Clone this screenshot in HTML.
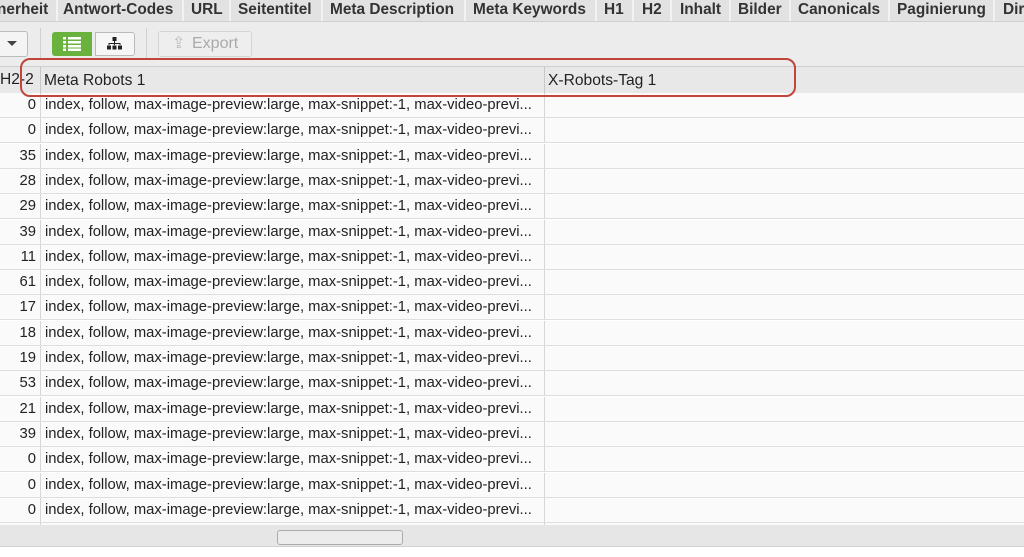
<!DOCTYPE html><html><head><style>
body{margin:0;width:1024px;height:557px;overflow:hidden;background:#fff;font-family:"Liberation Sans",sans-serif;position:relative}
.tabs{position:absolute;top:0;left:0;width:1024px;height:21px;background:#e2e2e2;border-bottom:1px solid #cfcfcf}
.tab{position:absolute;top:0;height:21px;line-height:20px;font-size:15.4px;font-weight:bold;color:#333;white-space:nowrap}
.sep{position:absolute;top:0;width:2px;height:21px;background:#f2f2f2}
.tb{position:absolute;top:22px;left:0;width:1024px;height:44px;background:#ececec}
.hdr{position:absolute;top:66px;left:0;width:1024px;height:26px;background:#e8e8e8;border-top:1px solid #cfcfcf;border-bottom:1px solid #cfcfcf;font-size:15.6px;color:#222}
.row{position:absolute;left:0;width:1024px;height:24px;border-bottom:1px solid #dedede;background:#fafafa;font-size:14.8px;color:#222;line-height:25px}
.n{position:absolute;right:988px;text-align:right}
.t{position:absolute;left:45px;white-space:nowrap}
.v{position:absolute;top:0;bottom:0;width:1px;background:#d6d6d6}
</style></head><body>
<div class="tabs">
<div class="tab" style="left:-3px">nerheit</div>
<div class="tab" style="left:63px">Antwort-Codes</div>
<div class="tab" style="left:191px">URL</div>
<div class="tab" style="left:238px">Seitentitel</div>
<div class="tab" style="left:330px">Meta Description</div>
<div class="tab" style="left:473px">Meta Keywords</div>
<div class="tab" style="left:604px">H1</div>
<div class="tab" style="left:642px">H2</div>
<div class="tab" style="left:680px">Inhalt</div>
<div class="tab" style="left:738px">Bilder</div>
<div class="tab" style="left:798px">Canonicals</div>
<div class="tab" style="left:897px">Paginierung</div>
<div class="tab" style="left:1003px">Dir</div>
<div class="sep" style="left:56px"></div><div class="sep" style="left:182px"></div><div class="sep" style="left:229px"></div><div class="sep" style="left:321px"></div><div class="sep" style="left:464px"></div><div class="sep" style="left:595px"></div><div class="sep" style="left:632px"></div><div class="sep" style="left:670px"></div><div class="sep" style="left:729px"></div><div class="sep" style="left:789px"></div><div class="sep" style="left:888px"></div><div class="sep" style="left:993px"></div>
</div>
<div class="tb">
<div style="position:absolute;left:-5px;top:9px;width:31px;height:24px;border:1px solid #bbb;border-radius:3px;background:#f4f4f4"></div>
<div style="position:absolute;left:7px;top:19px;width:0;height:0;border-left:5px solid transparent;border-right:5px solid transparent;border-top:5px solid #444"></div>
<div style="position:absolute;left:40px;top:6px;width:1px;height:32px;background:#d0d0d0"></div>
<div style="position:absolute;left:52px;top:10px;width:40px;height:24px;background:#6ab23e;border-radius:3px 0 0 3px"></div>
<svg style="position:absolute;left:63px;top:15px" width="18" height="14"><g fill="#fff"><rect x="0" y="0" width="3" height="2.5"/><rect x="5" y="0" width="13" height="2.5"/><rect x="0" y="4" width="3" height="2.5"/><rect x="5" y="4" width="13" height="2.5"/><rect x="0" y="8" width="3" height="2.5"/><rect x="5" y="8" width="13" height="2.5"/><rect x="0" y="11.5" width="3" height="2.5"/><rect x="5" y="11.5" width="13" height="2.5"/></g></svg>
<div style="position:absolute;left:95px;top:10px;width:38px;height:22px;border:1px solid #bbb;border-radius:0 3px 3px 0;background:#f6f6f6"></div>
<svg style="position:absolute;left:107px;top:15px" width="15" height="13"><g fill="#222"><rect x="5.5" y="0" width="4" height="4"/><rect x="7" y="4" width="1" height="2"/><rect x="1.5" y="6" width="12" height="1"/><rect x="1.5" y="6" width="1" height="2"/><rect x="7" y="6" width="1" height="2"/><rect x="12.5" y="6" width="1" height="2"/><rect x="0" y="8.5" width="4" height="4"/><rect x="5.5" y="8.5" width="4" height="4"/><rect x="11" y="8.5" width="4" height="4"/></g></svg>
<div style="position:absolute;left:146px;top:6px;width:1px;height:32px;background:#d0d0d0"></div>
<div style="position:absolute;left:158px;top:9px;width:92px;height:24px;border:1px solid #d4d4d4;border-radius:3px;background:#eeeeee;color:#aaa;font-size:16px;line-height:24px"><span style="position:absolute;left:13px;color:#bbb">⇪</span><span style="position:absolute;left:33px">Export</span></div>
</div>
<div class="hdr">
<span style="position:absolute;left:0;top:4px;width:40px;overflow:hidden;white-space:nowrap">H2-2</span>
<div class="v" style="left:40px;background:#c8c8c8"></div>
<span style="position:absolute;left:44px;top:5px">Meta Robots 1</span>
<div class="v" style="left:544px;background:#c8c8c8"></div>
<span style="position:absolute;left:548px;top:5px">X-Robots-Tag 1</span>
</div>
<div id="rows"></div>
<div style="position:absolute;z-index:5;left:20px;top:58px;width:776px;height:39px;border:2.5px solid #c0453a;border-radius:10px;box-sizing:border-box"></div>
<div style="position:absolute;left:0;top:525px;width:1024px;height:21px;background:#e6e6e6;border-bottom:1px solid #d0d0d0"></div>
<div style="position:absolute;left:277px;top:530px;width:124px;height:13px;border:1px solid #aaa;border-radius:3px;background:#ececec"></div>
<script>
var nums=[0,0,35,28,29,39,11,61,17,18,19,53,21,39,0,0,0],h='';
for(var i=0;i<nums.length;i++){h+='<div class="row" style="top:'+(93+i*25.3)+'px"><span class="n">'+nums[i]+'</span><div class="v" style="left:40px"></div><span class="t">index, follow, max-image-preview:large, max-snippet:-1, max-video-previ...</span><div class="v" style="left:544px"></div></div>';}
h+='<div class="row" style="top:523px;height:2px;border:none"><div class="v" style="left:40px"></div><div class="v" style="left:544px"></div></div>';
document.getElementById('rows').innerHTML=h;
</script>
</body></html>
